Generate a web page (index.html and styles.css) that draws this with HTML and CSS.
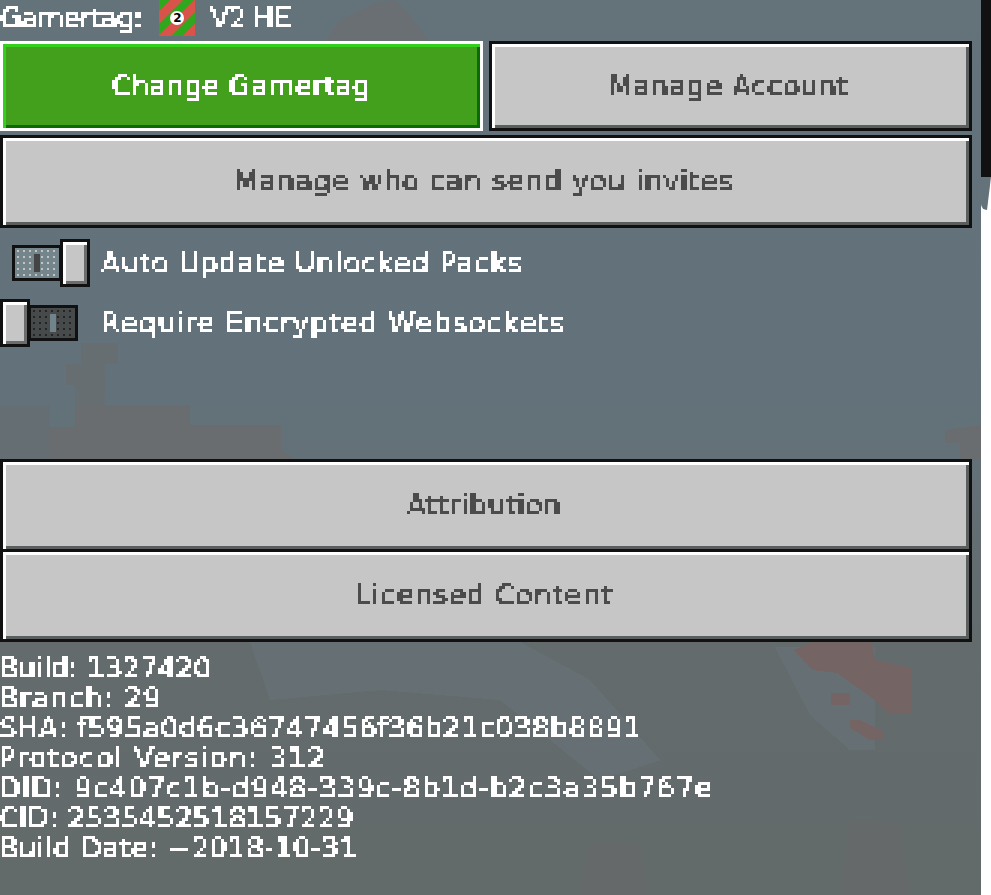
FILE: index.html
```html
<!DOCTYPE html>
<html lang="en">
<head>
  <meta charset="UTF-8">
  <title>Profile Settings</title>
  <link rel="stylesheet" href="styles.css">
</head>
<body>
  <svg class="filters" aria-hidden="true">
    <!-- blocky 3px look for the game's bitmap text -->
    <filter id="pixel" x="0" y="0" width="100%" height="100%" color-interpolation-filters="sRGB">
      <feFlood x="1" y="1" width="1" height="1" flood-color="#000"/>
      <feComposite x="0" y="0" width="3" height="3"/>
      <feTile result="grid"/>
      <feComposite in="SourceGraphic" in2="grid" operator="in"/>
      <feMorphology operator="dilate" radius="1"/>
      <feComponentTransfer>
        <feFuncA type="discrete" tableValues="0 0 1 1 1"/>
      </feComponentTransfer>
    </filter>
  </svg>

  <div class="screen">
    <svg class="backdrop" viewBox="0 0 981 895" shape-rendering="crispEdges" aria-hidden="true">
      <polygon fill="#6a6f74" points="325,41 340,20 375,3 395,0 410,15 430,41"/>
      <polygon fill="#656e73" points="0,405 50,405 50,459 0,459"/>
      <polygon fill="#676e72" points="81,343 118,343 118,364 105,364 105,427 75,427 75,385 66,385 66,364 81,364"/>
      <polygon fill="#6a6d6f" points="75,427 75,405 190,405 190,425 281,425 281,450 295,459 50,459 50,427"/>
      <polygon fill="#696d70" points="945,430 981,425 981,459 960,459 960,443 945,443"/>
      <g fill="#656f74">
        <polygon points="250,642 520,642 590,680 660,760 600,780 500,700 380,690 270,700"/>
        <polygon points="775,647 875,647 875,750 850,750 810,715"/>
      </g>
      <g fill="#746464">
        <polygon points="794,650 812,642 872,642 875,660 912,668 912,713 887,713 875,700 837,673 812,670"/>
        <rect x="831" y="693" width="19" height="12"/>
        <polygon points="850,720 860,720 884,732 884,740 870,740 850,728"/>
      </g>
      <g fill="#666969">
        <polygon points="590,840 640,845 650,895 580,895"/>
        <polygon points="850,820 900,825 910,895 840,895"/>
      </g>
    </svg>

    <div class="gamertag">
      <span class="px">Gamertag:</span>
      <svg class="avatar" viewBox="0 0 36 36" aria-hidden="true">
        <defs>
          <pattern id="stripes" width="17" height="17" patternUnits="userSpaceOnUse" patternTransform="rotate(-45)">
            <rect width="17" height="17" fill="#d9534a"/>
            <rect width="17" height="8" fill="#2fa81e"/>
          </pattern>
        </defs>
        <rect width="36" height="36" fill="url(#stripes)"/>
        <circle cx="18" cy="18" r="7" fill="#fff"/>
        <text x="18" y="22" text-anchor="middle" class="avatar-num">2</text>
      </svg>
      <span class="px">V2 HE</span>
    </div>

    <div class="button-row">
      <button class="btn btn-green"><span class="px">Change Gamertag</span></button>
      <button class="btn"><span class="px">Manage Account</span></button>
    </div>
    <button class="btn btn-wide invites"><span class="px">Manage who can send you invites</span></button>

    <div class="toggles">
      <div class="toggle-row">
        <div class="toggle toggle-on">
          <div class="track"><i></i></div>
          <div class="thumb"></div>
        </div>
        <span class="px">Auto Update Unlocked Packs</span>
      </div>
      <div class="toggle-row toggle-row-wide">
        <div class="toggle toggle-off">
          <div class="thumb"></div>
          <div class="track"><i></i></div>
        </div>
        <span class="px">Require Encrypted Websockets</span>
      </div>
    </div>

    <div class="links">
      <button class="btn btn-wide"><span class="px">Attribution</span></button>
      <button class="btn btn-wide licensed"><span class="px">Licensed Content</span></button>
    </div>

    <div class="info">
      <div><span class="px">Build: 1327420</span></div>
      <div class="line-branch"><span class="px">Branch: 29</span></div>
      <div class="line-sha"><span class="px">SHA: f595a0d6c36747456f36b21c038b8891</span></div>
      <div class="line-protocol"><span class="px">Protocol Version: 312</span></div>
      <div class="line-did"><span class="px">DID: 9c407c1b-d948-339c-8b1d-b2c3a35b767e</span></div>
      <div class="line-cid"><span class="px">CID: 2535452518157229</span></div>
      <div class="line-date"><span class="px">Build Date: ~2018-10-31</span></div>
    </div>
  </div>

  <div class="scrollbar">
    <div class="scroll-thumb"></div>
    <div class="scroll-notch"></div>
  </div>
</body>
</html>
```

FILE: styles.css
```css
* {
  box-sizing: border-box;
  margin: 0;
  padding: 0;
}

html, body {
  height: 100%;
  background: #fff;
  overflow: hidden;
}

body {
  display: flex;
  font-family: "DejaVu Sans", sans-serif;
  font-size: 28px;
  color: #fff;
}

.filters {
  position: absolute;
  width: 0;
  height: 0;
}

.px {
  display: inline-block;
  padding-top: 1px;
  margin-top: -1px;
  line-height: 30px;
  -webkit-text-stroke: 0.6px currentColor;
  filter: url(#pixel);
}

.screen {
  position: relative;
  flex: 0 0 981px;
  height: 895px;
  padding-right: 9px;
  background: linear-gradient(#64727a 0%, #63727a 45%, #636b6d 72%, #636a6a 100%);
}

.backdrop {
  position: absolute;
  top: 0;
  left: 0;
  width: 981px;
  height: 895px;
}

.gamertag, .button-row, .btn, .toggles, .links, .info {
  position: relative;
}

.gamertag {
  display: flex;
  align-items: center;
  height: 41px;
  padding-bottom: 3px;
  letter-spacing: -0.9px;
}

.avatar {
  width: 36px;
  height: 36px;
  margin: -2px 15px 0 17px;
}

.avatar-num {
  font-size: 12px;
  font-weight: bold;
  fill: #000;
}

.button-row {
  display: flex;
  gap: 6px;
}

.button-row .btn {
  flex: 0 0 483px;
}

.btn {
  display: block;
  height: 90px;
  padding-right: 4px;
  border: 3px solid #111;
  background: #c6c6c6;
  box-shadow: inset 3px 3px 0 #fff, inset -3px -3px 0 #5b5e5e;
  color: #4c4c4c;
  font: inherit;
  letter-spacing: 0.5px;
}

.btn-green {
  padding-right: 1px;
  border-color: #fff;
  background: #43a01d;
  box-shadow: inset 3px 3px 0 #35d01d, inset -3px -3px 0 #0a6c00;
  color: #fff;
  letter-spacing: 0.1px;
}

.btn-wide {
  width: 100%;
  height: 93px;
}

.invites {
  margin-top: 4px;
  letter-spacing: 0.8px;
}

.toggles {
  display: flex;
  flex-direction: column;
  gap: 12px;
  margin-top: 11px;
}

.toggle-row {
  display: flex;
  align-items: center;
  height: 48px;
  padding-top: 2px;
  letter-spacing: 0.8px;
}

.toggle-row-wide {
  letter-spacing: 1.1px;
}

.toggle {
  display: flex;
  align-items: center;
  width: 90px;
  margin-top: -2px;
  margin-right: 11px;
}

.toggle-on {
  padding-left: 12px;
}

.track {
  display: flex;
  align-items: center;
  justify-content: center;
  width: 50px;
  height: 36px;
  border: 3px solid #111;
  background-size: 6px 6px;
}

.track i {
  display: block;
  width: 6px;
  height: 18px;
}

.toggle-on .track {
  background-color: #75858c;
  background-image: radial-gradient(#c6c6c6 0.7px, transparent 0.9px);
  margin-right: -2px;
}

.toggle-on .track i {
  background: #444;
}

.toggle-off .track {
  background-color: #474a4b;
  background-image: radial-gradient(#222 0.7px, transparent 0.9px);
  margin-left: -2px;
}

.toggle-off .track i {
  background: #71838b;
}

.thumb {
  position: relative;
  flex: 0 0 30px;
  height: 48px;
  border: 3px solid #111;
  background: #c6c6c6;
  box-shadow: inset 3px 3px 0 #fff, inset -3px -3px 0 #6b6d6d;
}

.links {
  margin-top: 112px;
}

.links .btn + .btn {
  margin-top: -3px;
}

.licensed {
  letter-spacing: 0.9px;
}

.info {
  margin: 12px 0 0 -1px;
  line-height: 30px;
  letter-spacing: -0.1px;
  white-space: nowrap;
}

.info div {
  height: 30px;
}

.line-branch {
  letter-spacing: 1px;
}

.line-sha {
  letter-spacing: 0.5px;
}

.line-protocol {
  letter-spacing: 1.5px;
}

.line-did {
  letter-spacing: 1.1px;
}

.line-cid {
  letter-spacing: 0.1px;
}

.line-date {
  letter-spacing: 0.35px;
}

.scrollbar {
  flex: 0 0 10px;
}

.scroll-thumb {
  height: 177px;
  background: #111;
}

.scroll-notch {
  height: 33px;
  border-bottom-left-radius: 6px;
  background: #64727a;
  clip-path: polygon(0 0, 100% 0, 60% 100%, 0 100%);
}
```
